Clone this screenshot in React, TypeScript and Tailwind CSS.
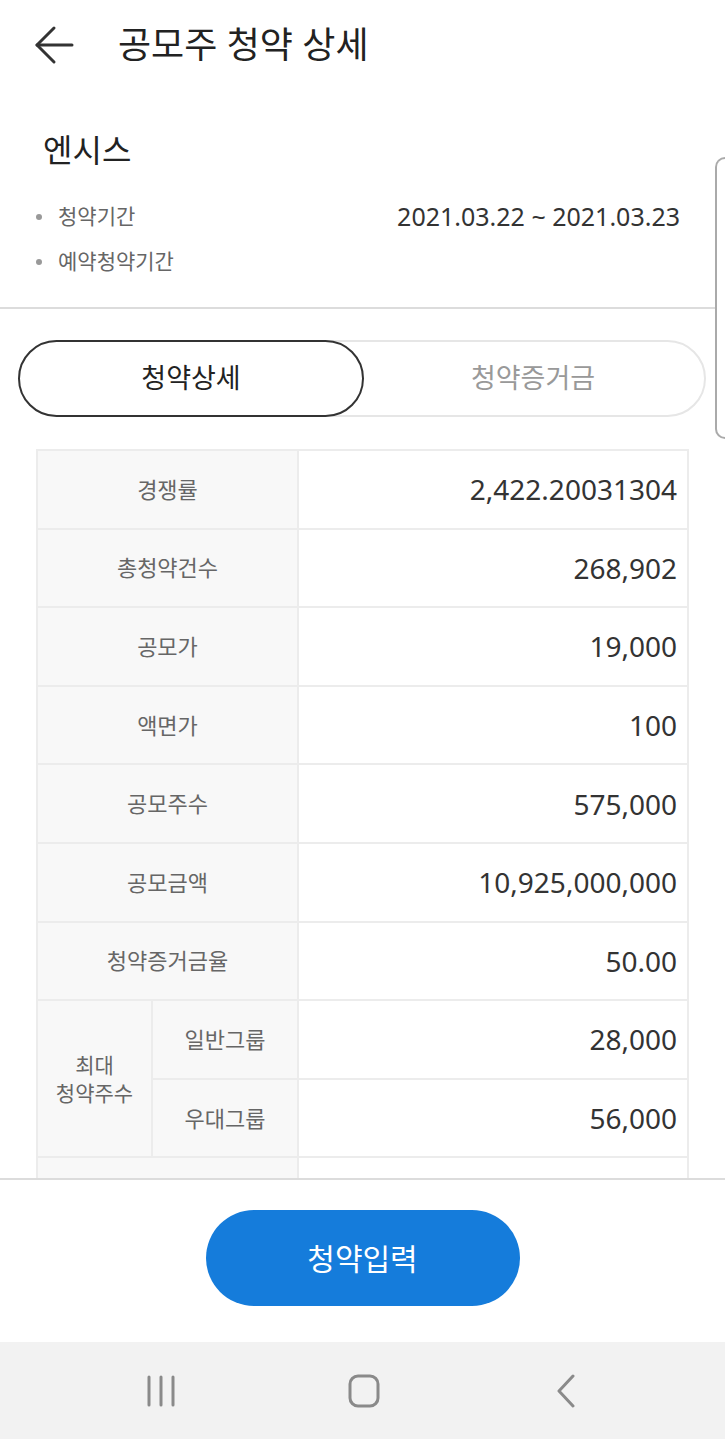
import React from "react";

const font = { fontFamily: '"Noto Sans", "Noto Sans CJK KR", sans-serif' };

function Row({ label, value }: { label: string; value: string }) {
  return (
    <div className="flex h-[78.6px] border-b-2 border-[#ececec]">
      <div className="w-[261px] shrink-0 bg-[#f8f8f8] border-r-2 border-[#ececec] flex items-center justify-center text-[22px] text-[#666]">
        {label}
      </div>
      <div className="flex-1 flex items-center justify-end pr-[10px] text-[28px] text-[#333]">
        {value}
      </div>
    </div>
  );
}

function SubRow({ label, value }: { label: string; value: string }) {
  return (
    <div className="flex h-[78.6px] border-b-2 border-[#ececec]">
      <div className="w-[146px] shrink-0 bg-[#f8f8f8] border-r-2 border-[#ececec] flex items-center justify-center text-[22px] text-[#666]">
        {label}
      </div>
      <div className="flex-1 flex items-center justify-end pr-[10px] text-[28px] text-[#333]">
        {value}
      </div>
    </div>
  );
}

export default function App() {
  const rows: [string, string][] = [
    ["경쟁률", "2,422.20031304"],
    ["총청약건수", "268,902"],
    ["공모가", "19,000"],
    ["액면가", "100"],
    ["공모주수", "575,000"],
    ["공모금액", "10,925,000,000"],
    ["청약증거금율", "50.00"],
  ];
  return (
    <div className="relative w-[725px] h-[1439px] bg-white flex flex-col overflow-hidden" style={font}>
      {/* Header */}
      <div className="h-[90px] shrink-0 flex items-center">
        <div className="w-[118px] flex items-center pl-[34px]">
          <svg width="40" height="40" viewBox="0 0 40 40" fill="none" stroke="#333" strokeWidth="3" strokeLinecap="round" strokeLinejoin="round">
            <path d="M3 20 H38" />
            <path d="M20 3 L3 20 L20 37" />
          </svg>
        </div>
        <div className="text-[36px] text-[#222] leading-none">공모주 청약 상세</div>
      </div>

      {/* Scroll content */}
      <div className="flex-1 overflow-hidden">
        <div className="pl-[43px] pr-[45px] pt-[38px]">
          <div className="text-[32px] text-[#222] leading-[44px]">엔시스</div>
          <div className="mt-[22px] flex items-center h-[45px]">
            <span className="w-[6px] h-[6px] rounded-full bg-[#999] -ml-[7px] mr-[16px]" />
            <span className="text-[21px] text-[#666]">청약기간</span>
            <span className="ml-auto text-[25px] text-[#333]">2021.03.22 ~ 2021.03.23</span>
          </div>
          <div className="flex items-center h-[45px]">
            <span className="w-[6px] h-[6px] rounded-full bg-[#999] -ml-[7px] mr-[16px]" />
            <span className="text-[21px] text-[#666]">예약청약기간</span>
          </div>
        </div>
        <div className="mt-[23px] h-[2px] bg-[#dcdcdc]" />

        {/* Tabs */}
        <div className="mx-[18px] mt-[31px] w-[688px] h-[77px] rounded-full border-2 border-[#e6e6e6] flex relative">
          <div className="-m-[2px] w-[346px] h-[77px] rounded-full border-2 border-[#333] bg-white flex items-center justify-center text-[27px] text-[#222]">
            청약상세
          </div>
          <div className="flex-1 flex items-center justify-center text-[27px] text-[#999]">
            청약증거금
          </div>
        </div>

        {/* Table */}
        <div className="mx-[36px] mt-[32px] w-[653px] border-2 border-b-0 border-[#ececec]">
          {rows.map(([l, v]) => (
            <Row key={l} label={l} value={v} />
          ))}
          <div className="flex">
            <div className="w-[115px] shrink-0 bg-[#f8f8f8] border-r-2 border-b-2 border-[#ececec] flex flex-col items-center justify-center text-[21px] text-[#666] leading-[28px]">
              <span>최대</span>
              <span>청약주수</span>
            </div>
            <div className="flex-1 flex flex-col">
              <SubRow label="일반그룹" value="28,000" />
              <SubRow label="우대그룹" value="56,000" />
            </div>
          </div>
          <div className="flex h-[79px]">
            <div className="w-[261px] shrink-0 bg-[#f8f8f8] border-r-2 border-[#ececec]" />
            <div className="flex-1" />
          </div>
        </div>
      </div>

      {/* Bottom button */}
      <div className="h-[164px] shrink-0 border-t-2 border-[#dcdcdc] bg-white flex justify-center pt-[30px]">
        <div className="w-[314px] h-[96px] rounded-full bg-[#157cdb] flex items-center justify-center text-[30px] text-white">
          청약입력
        </div>
      </div>

      {/* Nav bar */}
      <div className="h-[97px] shrink-0 bg-[#f2f2f2] flex items-center">
        <div className="w-[322px] flex justify-center">
          <svg width="32" height="32" viewBox="0 0 32 32" stroke="#8a8a8a" strokeWidth="3" strokeLinecap="round">
            <path d="M4 2 V30" />
            <path d="M16 2 V30" />
            <path d="M28 2 V30" />
          </svg>
        </div>
        <div className="w-[84px] flex justify-center">
          <svg width="32" height="34" viewBox="0 0 32 34" fill="none" stroke="#8a8a8a" strokeWidth="3">
            <rect x="2" y="2" width="28" height="30" rx="8" />
          </svg>
        </div>
        <div className="flex-1 flex justify-start pl-[149px]">
          <svg width="22" height="34" viewBox="0 0 22 34" fill="none" stroke="#8a8a8a" strokeWidth="3" strokeLinecap="round" strokeLinejoin="round">
            <path d="M18 2 L4 17 L18 32" />
          </svg>
        </div>
      </div>

      {/* Edge handle overlay */}
      <div className="absolute right-0 top-[157px] w-[10px] h-[282px] rounded-l-[12px] border-2 border-r-0 border-[#aaa] bg-white" />
    </div>
  );
}
